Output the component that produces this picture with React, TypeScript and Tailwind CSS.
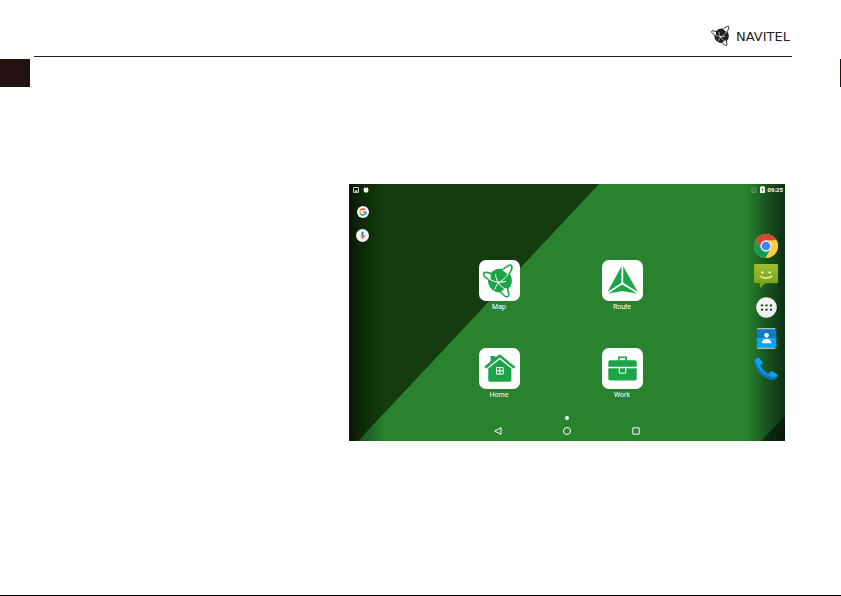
import type { ReactNode } from "react";

function NavitelMark({ className }: { className: string }) {
  return (
    <svg viewBox="8 8 108 112" className={className} aria-hidden="true">
      <circle cx="65" cy="63" r="37" fill="currentColor" />
      <g fill="white" stroke="currentColor" strokeWidth="5" strokeLinecap="round">
        <path d="M73 30 C84 18 97 12 101 16 C104 21 99 34 91 45" />
        <path d="M36 41 C24 36 15 36 14 41 C13 47 23 56 36 63" />
        <path d="M67 97 C75 108 85 115 90 112 C94 109 92 98 87 86" />
      </g>
      <g fill="none" stroke="white" strokeWidth="3">
        <path d="M74 31 C81 28 87 25 91 25" />
        <path d="M30 57 C43 65 57 70 75 67" />
        <path d="M92 41 C83 54 72 63 58 71 L48 90" />
        <path d="M51 43 C53 59 58 68 66 77 C73 86 80 89 87 89" />
        <path d="M72 67 L84 65" />
      </g>
      <circle cx="61" cy="69" r="3" fill="white" />
    </svg>
  );
}

function RouteIcon() {
  return (
    <svg viewBox="0 0 124 124" className="size-full" fill="#1ba548" aria-hidden="true">
      <path d="M59 19 L59 69 L17 96 Z" />
      <path d="M64 19 L64 69 L108 96 Z" />
      <path d="M61 74 L19 101 L61 94 L106 101 Z" />
    </svg>
  );
}

function HomeIcon() {
  return (
    <svg viewBox="0 0 124 124" className="size-full" aria-hidden="true">
      <path d="M35 40 V24 H49 V29 L63 19 L110 57 L105 63 L63 29 L21 63 L16 57 Z" fill="#1ba548" />
      <path d="M63 34 L98 62 V97 Q98 102 93 102 H33 Q28 102 28 97 V62 Z" fill="#1ba548" />
      <path d="M53 59 H73 V79 H53 Z M63 59 V79 M53 69 H73" fill="none" stroke="white" strokeWidth="3" />
    </svg>
  );
}

function WorkIcon() {
  return (
    <svg viewBox="0 0 124 124" className="size-full" aria-hidden="true">
      <path d="M51 39 V28 H73 V39" fill="none" stroke="#1ba548" strokeWidth="5" />
      <path d="M24 37 H100 Q105 37 105 42 V57 H19 V42 Q19 37 24 37 Z" fill="#1ba548" />
      <path d="M19 61 H105 V93 Q105 98 100 98 H24 Q19 98 19 93 Z" fill="#1ba548" />
      <path d="M52 61 V76 H72 V61" fill="none" stroke="white" strokeWidth="3" />
    </svg>
  );
}

function AppTile({ label, children }: { label: string; children: ReactNode }) {
  return (
    <button type="button" className="flex flex-col items-center">
      <span className="flex size-[41px] items-center justify-center rounded-[7px] bg-white text-[#1ba548]">
        {children}
      </span>
      <span className="text-[7px] leading-[13px] text-white">{label}</span>
    </button>
  );
}

function Wallpaper() {
  return (
    <svg
      viewBox="0 0 436 257"
      preserveAspectRatio="none"
      className="absolute inset-0 size-full"
      aria-hidden="true"
    >
      <defs>
        <linearGradient id="shadeLeft">
          <stop offset="0" stopColor="#000" stopOpacity="0.6" />
          <stop offset="0.4" stopColor="#000" stopOpacity="0.3" />
          <stop offset="1" stopColor="#000" stopOpacity="0" />
        </linearGradient>
        <linearGradient id="shadeRight">
          <stop offset="0" stopColor="#001008" stopOpacity="0" />
          <stop offset="0.5" stopColor="#001008" stopOpacity="0.38" />
          <stop offset="1" stopColor="#001008" stopOpacity="0.72" />
        </linearGradient>
      </defs>
      <rect width="436" height="257" fill="#28822e" />
      <path d="M0 0 H250 L9 257 H0 Z" fill="#153c0e" />
      <path d="M436 232 V257 H412 Z" fill="#153c0e" />
      <rect width="36" height="257" fill="url(#shadeLeft)" />
      <rect x="398" width="38" height="257" fill="url(#shadeRight)" />
    </svg>
  );
}

function StatusBar() {
  return (
    <div className="flex h-[11px] items-center justify-between pr-[2px] pl-1">
      <div className="flex items-center gap-1">
        <svg viewBox="0 0 18 18" className="size-[6px]" aria-hidden="true">
          <path d="M1.500 1.500 H16.500 V16.500 H1.500 Z" fill="none" stroke="#dce3da" strokeWidth="2.500" />
          <path d="M4 14 L8 9 L10 11 L12 8 L15 14 Z" fill="#dce3da" />
        </svg>
        <svg viewBox="0 0 18 18" className="size-[6px]" fill="white" aria-hidden="true">
          <path d="M3 1 L6 3 Q9 2 12 3 L15 1 L15 5 Q18 8 16 12 Q14 17 9 17 Q4 17 2 12 Q0 8 3 5 Z" />
        </svg>
      </div>
      <div className="flex items-center gap-[3px]">
        <svg viewBox="0 0 18 18" className="size-[6px]" fill="none" stroke="#76aa74" strokeWidth="2" aria-hidden="true">
          <path d="M6 2 H15 V16 H3 V5 Z M2 2 L16 16" />
        </svg>
        <svg viewBox="0 0 14 20" className="h-[7px] w-[5px]" aria-hidden="true">
          <path d="M4 0 H10 V2 H14 V20 H0 V2 H4 Z" fill="white" />
          <path d="M8 5 L4 12 H7 L6 17 L11 9 H8 Z" fill="#28722e" />
        </svg>
        <time className="text-[6px] leading-none font-bold text-white">09:25</time>
      </div>
    </div>
  );
}

function Shortcuts() {
  return (
    <div className="flex w-[27px] flex-col items-center gap-[11px] pt-[11px]">
      <button type="button" aria-label="Google">
        <svg viewBox="0 0 36 36" className="block size-3">
          <circle cx="18" cy="18" r="18" fill="#f5f5f5" />
          <g fill="none" strokeWidth="4.500">
            <path d="M10.200 13.500 A9 9 0 0 1 24.400 11.600" stroke="#ea4335" />
            <path d="M10.200 22.500 A9 9 0 0 1 10.200 13.500" stroke="#fbbc05" />
            <path d="M24 24.700 A9 9 0 0 1 10.200 22.500" stroke="#34a853" />
            <path d="M18 18.500 H27 A9 9 0 0 1 24 24.700" stroke="#4285f4" />
          </g>
        </svg>
      </button>
      <button type="button" aria-label="Voice search">
        <svg viewBox="0 0 39 39" className="block size-[13px]">
          <circle cx="19.500" cy="19.500" r="19.500" fill="#f5f5f5" />
          <path d="M12.500 18 A7 7 0 0 0 19.500 26" fill="none" stroke="#fbbc05" strokeWidth="2" />
          <path d="M26.500 18 A7 7 0 0 1 19.500 26" fill="none" stroke="#ea4335" strokeWidth="2" />
          <path d="M19.500 25 V30" stroke="#ea4335" strokeWidth="3" />
          <rect x="16" y="8" width="7" height="16" rx="3" fill="#4285f4" />
        </svg>
      </button>
    </div>
  );
}

function Dock() {
  return (
    <div className="flex w-[38px] flex-col items-center pt-[39px]">
      <button type="button" aria-label="Chrome">
        <svg viewBox="0 0 72 72" className="block size-6">
          <circle cx="36" cy="36" r="36" fill="#ffcd40" />
          <path d="M5 18 A36 36 0 0 1 67 18 L36 20 L22 44 Z" fill="#db4437" />
          <path d="M5 18 A36 36 0 0 0 35 72 L50 44 L22 44 Z" fill="#0f9d58" />
          <path d="M36 20 H68 A36 36 0 0 1 35 72 L50 44 Z" fill="#ffcd40" />
          <circle cx="36" cy="36" r="17" fill="#f1f1f1" />
          <circle cx="36" cy="36" r="13" fill="#4285f4" />
        </svg>
      </button>
      <button type="button" aria-label="Messages" className="mt-[6px]">
        <svg viewBox="0 0 72 72" className="block size-6">
          <defs>
            <linearGradient id="bubble" x2="0" y2="1">
              <stop offset="0" stopColor="#9fc02c" />
              <stop offset="1" stopColor="#789a1c" />
            </linearGradient>
          </defs>
          <path d="M4 0 H68 Q72 0 72 4 V54 Q72 58 68 58 H34 L18 72 V58 H4 Q0 58 0 54 V4 Q0 0 4 0 Z" fill="url(#bubble)" />
          <circle cx="25" cy="25" r="3.500" fill="#f7ffd0" />
          <circle cx="47" cy="25" r="3.500" fill="#f7ffd0" />
          <path d="M17 36 Q36 49 55 36" fill="none" stroke="#f7ffd0" strokeWidth="4" />
        </svg>
      </button>
      <button type="button" aria-label="All apps" className="mt-[9px]">
        <svg viewBox="0 0 63 63" className="block size-[21px]">
          <circle cx="31.500" cy="31.500" r="31" fill="#f2f2f2" />
          <g fill="#24492c">
            <circle cx="18" cy="25" r="3.500" />
            <circle cx="31.500" cy="25" r="3.500" />
            <circle cx="45" cy="25" r="3.500" />
            <circle cx="18" cy="38" r="3.500" />
            <circle cx="31.500" cy="38" r="3.500" />
            <circle cx="45" cy="38" r="3.500" />
          </g>
        </svg>
      </button>
      <button type="button" aria-label="Contacts" className="mt-[10px]">
        <svg viewBox="0 0 63 63" className="block size-[21px]">
          <path d="M4 0 H58 V63 H4 Z" fill="#a9bcc0" />
          <path d="M4 4 H59 Q62 4 62 8 Q58 18 62 31 H1 Q4 18 1 8 Q1 4 4 4 Z" fill="#0a7bc4" />
          <path d="M1 31 H62 Q59 45 62 55 Q62 59 58 59 H5 Q1 59 1 55 Q4 45 1 31 Z" fill="#09a3ee" />
          <circle cx="31.500" cy="22" r="7" fill="white" />
          <path d="M17 46 Q17 33 31.500 33 Q46 33 46 46 Z" fill="white" />
        </svg>
      </button>
      <button type="button" aria-label="Phone" className="mt-[8px]">
        <svg viewBox="0 0 72 72" className="block size-6">
          <path
            d="M2 10 Q6 3 14 2 L27 17 Q28 23 21 28 Q27 40 42 49 Q48 41 54 43 L72 55 Q72 62 64 67 Q55 72 43 67 Q10 52 2 25 Q-1 16 2 10 Z"
            fill="#0878b8"
          />
          <path
            d="M2 10 Q6 3 14 2 L27 17 Q24 21 17 21 Q22 41 43 54 Q49 50 54 43 L72 55 Q66 60 57 61 Q18 52 2 10 Z"
            fill="#12a5e6"
          />
        </svg>
      </button>
    </div>
  );
}

function NavigationBar() {
  return (
    <nav className="flex h-[14px] items-center justify-center">
      <button type="button" aria-label="Back" className="flex w-[69px] justify-center">
        <svg viewBox="0 0 24 24" className="size-2" fill="none" stroke="white" strokeWidth="3">
          <path d="M21 2 V22 L2 12 Z" />
        </svg>
      </button>
      <button type="button" aria-label="Home screen" className="flex w-[69px] justify-center">
        <svg viewBox="0 0 24 24" className="size-2" fill="none" stroke="white" strokeWidth="3">
          <circle cx="12" cy="12" r="10.500" />
        </svg>
      </button>
      <button type="button" aria-label="Recent apps" className="flex w-[69px] justify-center">
        <svg viewBox="0 0 24 24" className="size-2" fill="none" stroke="white" strokeWidth="3">
          <path d="M2.500 2.500 H21.500 V21.500 H2.500 Z" />
        </svg>
      </button>
    </nav>
  );
}

function TabletScreen() {
  return (
    <section className="relative font-['Roboto',sans-serif]" aria-label="Tablet home screen">
      <Wallpaper />
      <div className="relative">
        <StatusBar />
        <div className="flex">
          <Shortcuts />
          <div className="grid flex-1 grid-cols-[repeat(2,123px)] justify-center gap-y-[34px] pt-[65px] pr-[2px] pb-3">
            <AppTile label="Map">
              <NavitelMark className="size-9" />
            </AppTile>
            <AppTile label="Route">
              <RouteIcon />
            </AppTile>
            <AppTile label="Home">
              <HomeIcon />
            </AppTile>
            <AppTile label="Work">
              <WorkIcon />
            </AppTile>
          </div>
          <Dock />
        </div>
        <div className="flex h-2 items-center justify-center">
          <span className="size-1 rounded-full bg-white" />
        </div>
        <div className="pt-[2px] pb-[3px]">
          <NavigationBar />
        </div>
      </div>
    </section>
  );
}

export default function App() {
  return (
    <div className="flex min-h-screen flex-col border-b border-black bg-white">
      <header className="mr-[49px] ml-[34px] flex h-[57px] items-end justify-end border-b border-[#231f20] pr-[2px] pb-[9px]">
        <div className="flex items-center gap-1 text-[#231f20]">
          <NavitelMark className="size-[22px]" />
          <span className="font-['DejaVu_Sans',sans-serif] text-[13px] leading-none">NAVITEL</span>
        </div>
      </header>
      <div className="mt-[2px] flex h-7 justify-between">
        <span className="w-[30px] bg-[#231211]" />
        <span className="w-px bg-[#231211]" />
      </div>
      <main className="mt-[97px] mr-14 ml-[349px]">
        <TabletScreen />
      </main>
    </div>
  );
}
